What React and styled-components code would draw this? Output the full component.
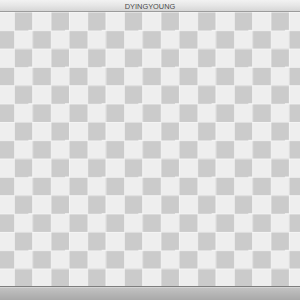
import React from 'react';
import styled, { createGlobalStyle } from 'styled-components';

const GlobalStyle = createGlobalStyle`
  html, body {
    margin: 0;
    padding: 0;
    width: 300px;
    height: 300px;
    overflow: hidden;
  }
  body {
    font-family: "Liberation Sans", Arial, sans-serif;
  }
`;

const Window = styled.div`
  width: 300px;
  height: 300px;
  display: flex;
  flex-direction: column;
  background: #eeeeee;
`;

const TitleBar = styled.div`
  height: 11px;
  flex: none;
  display: flex;
  align-items: center;
  justify-content: center;
  background: linear-gradient(to bottom, #f2f2f2 0%, #e6e6e6 50%, #d6d6d6 100%);
  border-bottom: 1px solid #9c9c9c;
`;

const Title = styled.span`
  font-size: 7.4px;
  line-height: 11px;
  color: #4a4a4a;
  padding-top: 1px;
`;

// checker cell size and horizontal offset, read off the reference
const cell = 18.33;
const offsetX = -4.33;

const Canvas = styled.div`
  flex: 1;
  position: relative;
  background-image: conic-gradient(#cbcbcb 0 25%, #eeeeee 0 50%, #cbcbcb 0 75%, #eeeeee 0);
  background-size: ${cell * 2}px ${cell * 2}px;
  background-position: ${offsetX}px 0px;

  &::after {
    content: '';
    position: absolute;
    inset: 0;
    background-image:
      linear-gradient(to right, rgba(255, 255, 255, 0.4) 1px, transparent 1px),
      linear-gradient(to bottom, rgba(255, 255, 255, 0.4) 1px, transparent 1px);
    background-size: ${cell}px ${cell}px;
    background-position: ${offsetX}px 0px;
  }
`;

const StatusBar = styled.div`
  height: 13px;
  flex: none;
  border-top: 1px solid #7e7e7e;
  box-shadow: inset 0 1px 0 #d4d4d4;
  background: linear-gradient(to bottom, #c4c4c4 0%, #b6b6b6 50%, #a9a9a9 100%);
`;

export default function App() {
  return (
    <>
      <GlobalStyle />
      <Window>
        <TitleBar>
          <Title>DYINGYOUNG</Title>
        </TitleBar>
        <Canvas />
        <StatusBar />
      </Window>
    </>
  );
}
